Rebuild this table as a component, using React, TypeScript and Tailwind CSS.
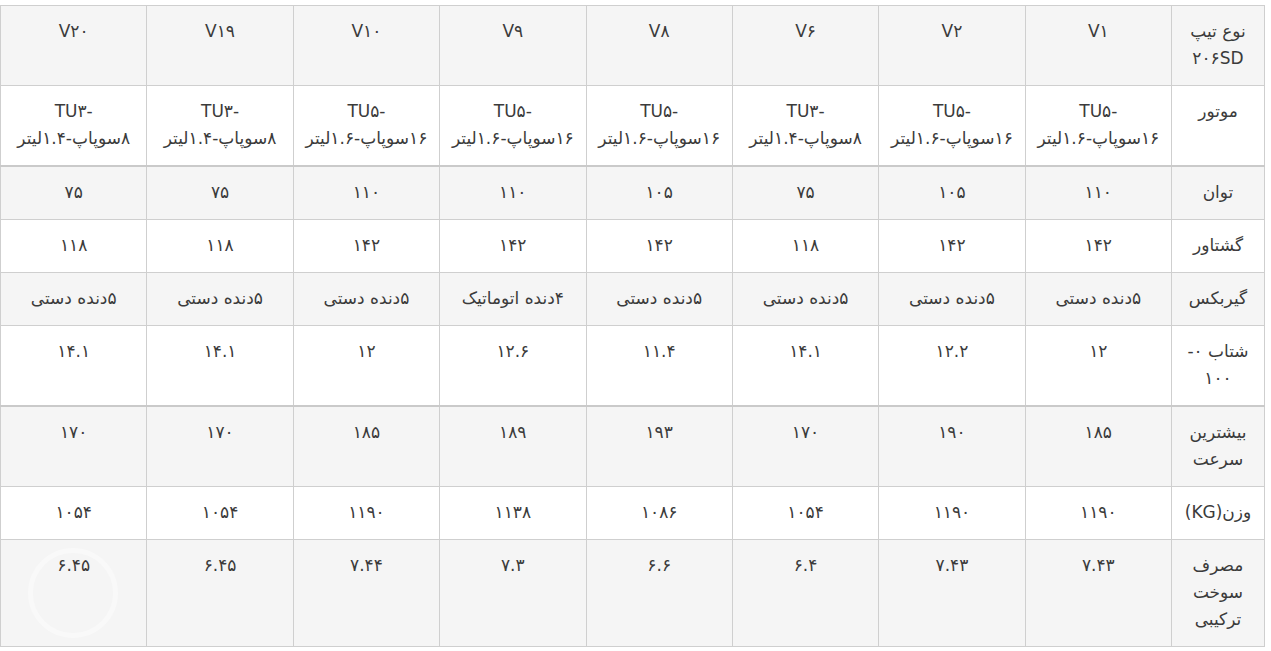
const versions = ["V۱", "V۲", "V۶", "V۸", "V۹", "V۱۰", "V۱۹", "V۲۰"];

// \u200b gives the browser a wrap point right after the hyphen
const tu5 = "TU۵-\u200b۱۶سوپاپ-۱.۶لیتر";
const tu3 = "TU۳-\u200b۸سوپاپ-۱.۴لیتر";
const manual = "۵دنده دستی";

type Row = { label: string; values: string[]; thick?: boolean };

const rows: Row[] = [
  { label: "موتور", values: [tu5, tu5, tu3, tu5, tu5, tu5, tu3, tu3], thick: true },
  { label: "توان", values: ["۱۱۰", "۱۰۵", "۷۵", "۱۰۵", "۱۱۰", "۱۱۰", "۷۵", "۷۵"] },
  { label: "گشتاور", values: ["۱۴۲", "۱۴۲", "۱۱۸", "۱۴۲", "۱۴۲", "۱۴۲", "۱۱۸", "۱۱۸"] },
  { label: "گیربکس", values: [manual, manual, manual, manual, "۴دنده اتوماتیک", manual, manual, manual] },
  { label: "شتاب ۰-\u200b۱۰۰", values: ["۱۲", "۱۲.۲", "۱۴.۱", "۱۱.۴", "۱۲.۶", "۱۲", "۱۴.۱", "۱۴.۱"], thick: true },
  { label: "بیشترین سرعت", values: ["۱۸۵", "۱۹۰", "۱۷۰", "۱۹۳", "۱۸۹", "۱۸۵", "۱۷۰", "۱۷۰"] },
  { label: "وزن(KG)", values: ["۱۱۹۰", "۱۱۹۰", "۱۰۵۴", "۱۰۸۶", "۱۱۳۸", "۱۱۹۰", "۱۰۵۴", "۱۰۵۴"] },
  { label: "مصرف سوخت ترکیبی", values: ["۷.۴۳", "۷.۴۳", "۶.۴", "۶.۶", "۷.۳", "۷.۴۴", "۶.۴۵", "۶.۴۵"] },
];

const cell = "border border-[#cfcfcf] px-[8px] pt-[12px] pb-[13px] align-top text-center";

export default function App() {
  return (
    <div
      dir="rtl"
      className="relative w-[1271px] h-[651px] overflow-hidden bg-white pt-[5px] pr-[6px] text-[#3b3b3b] text-[17px] leading-[27px]"
      style={{ fontFamily: '"DejaVu Sans", "Noto Sans", sans-serif' }}
    >
      <table className="w-full table-fixed border-collapse">
        <colgroup>
          <col className="w-[93px]" />
          {versions.map((v) => (
            <col key={v} />
          ))}
        </colgroup>
        <tbody>
          <tr className="bg-[#f5f5f5]">
            <td className={cell}>نوع تیپ ۲۰۶SD</td>
            {versions.map((v) => (
              <td key={v} className={cell}>
                {v}
              </td>
            ))}
          </tr>
          {rows.map((r, i) => (
            <tr
              key={r.label}
              className={`${i % 2 === 0 ? "bg-white" : "bg-[#f5f5f5]"} ${r.thick ? "border-b-2 border-[#cacaca]" : ""}`}
            >
              <td className={cell}>{r.label}</td>
              {r.values.map((v, j) => (
                <td key={j} className={cell}>
                  {v}
                </td>
              ))}
            </tr>
          ))}
        </tbody>
      </table>

      {/* faint watermark */}
      <div className="pointer-events-none absolute left-[28px] top-[548px] w-[90px] h-[90px] rounded-full border-[5px] border-white/40" />
    </div>
  );
}
